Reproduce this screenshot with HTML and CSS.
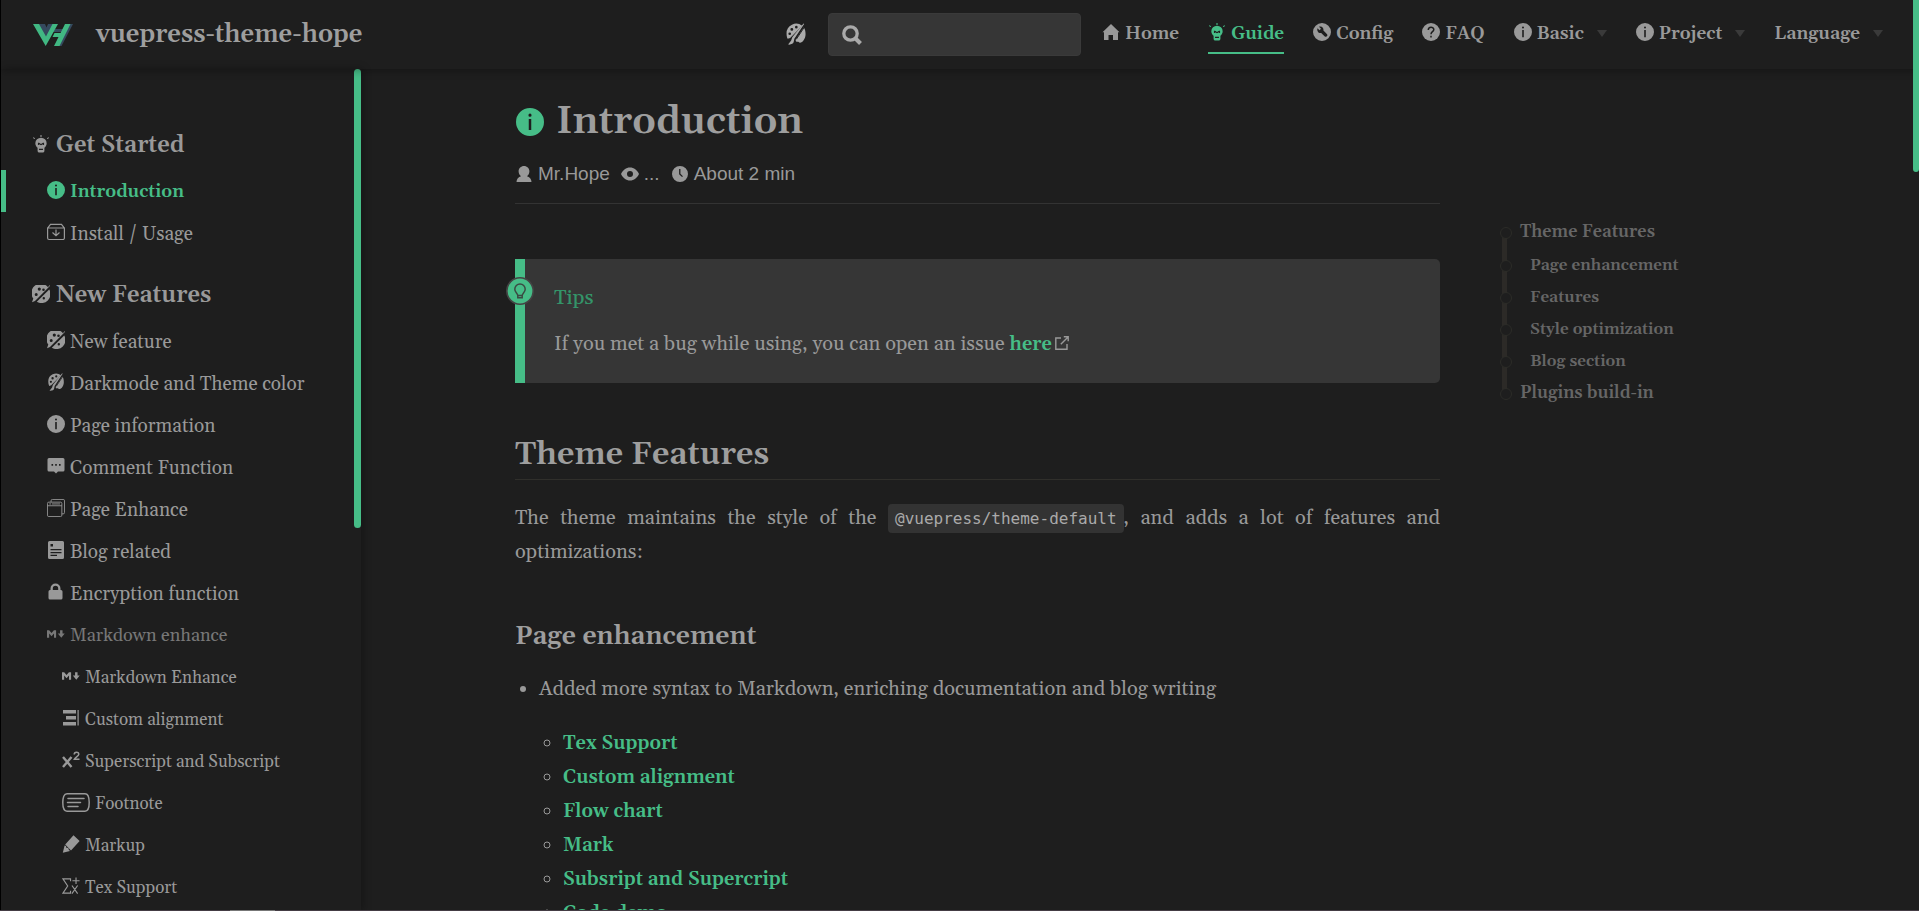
FILE: index.html
```html
<!DOCTYPE html>
<html lang="en">
<head>
<meta charset="utf-8">
<title>Introduction | vuepress-theme-hope</title>
<link rel="stylesheet" href="styles.css">
</head>
<body>
<svg class="sprite" aria-hidden="true">
  <symbol id="i-info" viewBox="0 0 18 18"><path fill-rule="evenodd" d="M9 0a9 9 0 1 0 0 18A9 9 0 0 0 9 0zM9 3.600a1 1 0 1 1 0 2 1 1 0 0 1 0-2zM8.200 7h1.600v7.200H8.200z"/></symbol>
  <symbol id="i-bulb" viewBox="0 0 18 20"><path fill-rule="evenodd" d="M9 3a6.300 6.300 0 0 0-6.300 6.300c0 2.300 1.200 3.800 2.500 5v3.200c0 1.200.8 2 2 2h3.600c1.200 0 2-.8 2-2v-3.200c1.300-1.200 2.500-2.700 2.500-5A6.300 6.300 0 0 0 9 3zM5.600 11.200V8.500h1.200L9 10l2.200-1.500h1.200v2.700h-1.100v-1L9 11.500l-2.300-1.300v1zM6.800 15.300h4.400v1.500H6.800z"/><path d="M8.400 0h1.200v2.200H8.400zM0 3.200l.6-.8 1.900 1.200-.6.8zM18 3.200l-.6-.8-1.900 1.200.6.8z"/></symbol>
  <symbol id="i-install" viewBox="0 0 18 18"><path fill="none" stroke="currentColor" stroke-width="1.200" d="M.6 5v10a1.500 1.500 0 0 0 1.500 1.500h13.800a1.500 1.500 0 0 0 1.500-1.500V5zM.8 4.800L3.500 1.400h11l2.700 3.400M9 6.500v6M5.500 9.500L9 12.700l3.500-3.200"/></symbol>
  <symbol id="i-discover" viewBox="0 0 18 18"><path fill-rule="evenodd" d="M17.600 0L16 2.300A9 9 0 0 0 1.300 13.500L0 17.200l3-1.200L17.900 1zM7.300 2.500a1.600 1.600 0 1 1 0 3.200 1.600 1.600 0 0 1 0-3.200zM4.200 8a1.500 1.500 0 1 1 0 3 1.500 1.500 0 0 1 0-3zM11.500 3.500a1.300 1.300 0 1 1 0 2.600 1.300 1.300 0 0 1 0-2.600z"/><path fill-rule="evenodd" d="M17.200 4.500L4.800 16.800A9 9 0 0 0 17.200 4.500zM11.800 12a1.200 1.200 0 1 1 0 2.400 1.200 1.200 0 0 1 0-2.400z"/></symbol>
  <symbol id="i-skin" viewBox="0 0 18 20"><path fill-rule="evenodd" d="M14.600 2.600A8.700 8.700 0 0 0 .4 9.500c0 1.900.3 3.400 1 4.900l2.300-.7zM5.200 4.500a1.300 1.300 0 1 1 0 2.600 1.300 1.300 0 0 1 0-2.600zM3.300 8.600a1.200 1.200 0 1 1 0 2.400 1.200 1.200 0 0 1 0-2.400zM9.300 2.600a1.200 1.200 0 1 1 0 2.400 1.200 1.200 0 0 1 0-2.400z"/><path d="M15.800.4L5.600 13l-1 3-2.800 3.600c2.500.3 4.800-.4 5.200-2.700l.5-2.500L16.400.8zM16 4L8.700 15.300c-.2 1.500.8 2.100 2 1.700 1-.3 1.200.9 2 .9 2.300 0 5-3.800 5-7.700 0-2.700-.5-4.800-1.700-6.200z"/><path fill="none" stroke="#1e1e1e" stroke-width=".8" d="M17 3.200L9.300 14.800"/></symbol>
  <symbol id="i-comment" viewBox="0 0 18 18"><path fill-rule="evenodd" d="M2 1h14a1.500 1.500 0 0 1 1.500 1.500V13a1.500 1.500 0 0 1-1.500 1.500h-5L9 16.500l-2-2H2A1.500 1.500 0 0 1 .5 13V2.500A1.500 1.500 0 0 1 2 1zM4.500 7v1.700h1.600V7zM8.200 7v1.700h1.600V7zM12 7v1.700h1.600V7z"/></symbol>
  <symbol id="i-pages" viewBox="0 0 20 20"><path fill="none" stroke="currentColor" stroke-width="1" d="M4.500 3.500V2A1.500 1.500 0 0 1 6 .5h12A1.500 1.500 0 0 1 19.500 2v13a1.500 1.500 0 0 1-1.500 1.500h-1.500M.5 5A1.500 1.500 0 0 1 2 3.500h13A1.500 1.500 0 0 1 16.500 5v13a1.500 1.500 0 0 1-1.500 1.500H2A1.500 1.500 0 0 1 .5 18zM.5 7.500h16M2.500 5.500h2M5.500 5.500h9"/></symbol>
  <symbol id="i-blog" viewBox="0 0 18 18"><path fill-rule="evenodd" d="M2.500 0h13A1.500 1.500 0 0 1 17 1.500v15a1.500 1.500 0 0 1-1.500 1.500h-13A1.500 1.500 0 0 1 1 16.500v-15A1.500 1.500 0 0 1 2.500 0zM3.500 3v2.500H6V3zM3.500 8v1.200h11V8zM3.500 11v1.200h11V11zM3.500 13.800V15H10v-1.200z"/></symbol>
  <symbol id="i-lock" viewBox="0 0 18 18"><path fill-rule="evenodd" d="M3.500 7V5.500a5 5 0 0 1 10 0V7h.5a1.500 1.500 0 0 1 1.500 1.500V15a1.500 1.500 0 0 1-1.500 1.500H3A1.500 1.500 0 0 1 1.500 15V8.500A1.500 1.500 0 0 1 3 7zM5.800 7h5.400V5.500a2.700 2.700 0 0 0-5.400 0z"/></symbol>
  <symbol id="i-md" viewBox="0 0 19 18"><path d="M0 13V5h2.300l2.500 3 2.500-3h2.300v8H7.400V8.400L4.800 11.300 2.300 8.400V13zM13.800 5h2.600v3.500h2.300L15.100 13l-3.700-4.500h2.400z"/></symbol>
  <symbol id="i-align" viewBox="0 0 18 18"><path d="M1 1h13v3.500H1zM4 7h10v3.500H4zM1 13h13v3.500H1zM15.500 1h1.200v15.500h-1.200z"/></symbol>
  <symbol id="i-sup" viewBox="0 0 18 18"><path fill="none" stroke="currentColor" stroke-width="2.400" d="M1 6l8.500 10M9.500 6L1 16"/><path fill="none" stroke="currentColor" stroke-width="1.500" d="M12.200 3.500c0-3 4.600-3 4.600-.3 0 1.900-3.500 3-4.500 5.100h5.200"/></symbol>
  <symbol id="i-note" viewBox="0 0 28 19"><path fill="none" stroke="currentColor" stroke-width="1.500" stroke-linecap="round" d="M5 .8h18c3 0 4.200 3.500 4.200 8.700s-1.200 8.700-4.200 8.700H5C2 18.200.8 14.700.8 9.500S2 .8 5 .8zM6 5.500h16M5.500 9.500h13M6 13.500h10"/></symbol>
  <symbol id="i-pen" viewBox="0 0 18 18"><path d="M11.500.3L17.600 6 9 15.500 3.200 9.600zM2.600 10.400L4 11l.3 1.800 1.900.3.600 1.600L8 16l-7.200 1.700z"/></symbol>
  <symbol id="i-tex" viewBox="0 0 19 18"><path fill="none" stroke="currentColor" stroke-width="1.200" d="M9 4V1.500H1L6 9l-5 7.500h8V14M10.500 8.500l6 8.500M16.500 8.500l-6 8.500M11 3.500h7.500M14.800 0v7"/></symbol>
  <symbol id="i-home" viewBox="0 0 18 18"><path d="M9 1L.5 9.200H2V17h4.500v-5h4.500v5H16V9.200h1.500z"/></symbol>
  <symbol id="i-tool" viewBox="0 0 18 18"><path fill-rule="evenodd" d="M9 0a9 9 0 1 0 0 18A9 9 0 0 0 9 0zM4.500 5.200l2 2 1.500-1.500-2-2c2.800-.8 5 1.200 4.400 3.800l3.700 3.700c1 1.500-.8 3.200-2.300 2.200L8.200 9.900C5.500 10.500 3.600 8 4.500 5.200z"/></symbol>
  <symbol id="i-help" viewBox="0 0 18 18"><path d="M9 0a9 9 0 1 0 0 18A9 9 0 0 0 9 0z"/><path fill="none" stroke="#1e1e1e" stroke-width="1.500" d="M6.300 7c0-3.800 5.500-3.500 5.500-.5 0 2.200-2.800 2.200-2.800 4.700M9 12.700v1.900"/></symbol>
  <symbol id="i-user" viewBox="0 0 16 16"><path d="M8 0C5 0 2.600 2.300 2.600 5.300c0 2.200 1 4 2.400 5C2.500 11 .5 13 .5 16h15c0-3-2-5-4.500-5.700 1.400-1 2.400-2.800 2.400-5C13.400 2.300 11 0 8 0z"/></symbol>
  <symbol id="i-eye" viewBox="0 0 18 16"><path fill-rule="evenodd" d="M9 1.500C5 1.500 2 4 0 8c2 4 5 6.500 9 6.500S16 12 18 8c-2-4-5-6.500-9-6.500zM9 5a3 3 0 1 1 0 6 3 3 0 0 1 0-6z"/></symbol>
  <symbol id="i-clock" viewBox="0 0 18 18"><path fill-rule="evenodd" d="M9 0a9 9 0 1 0 0 18A9 9 0 0 0 9 0zM8 3.500h1.500v5.200l2.800 2.800-1 1L8 9.300z"/></symbol>
  <symbol id="i-search" viewBox="0 0 20 20"><path fill="none" stroke="currentColor" stroke-width="4" d="M13 13L18.500 18.500"/><circle cx="8.500" cy="8.500" r="6.700" fill="none" stroke="currentColor" stroke-width="3.300"/></symbol>
  <symbol id="i-tip" viewBox="0 0 28 28"><circle cx="14" cy="14" r="13.200" fill="#46bd87" stroke="#444" stroke-width="1.600"/><path fill="none" stroke="#3b4a43" stroke-width="1.500" d="M11.800 18.500c0-2.400-3-3-3-6.300a5.200 5.200 0 0 1 10.400 0c0 3.300-3 3.900-3 6.300zM11.800 18.500v2.300h4.400v-2.300"/></symbol>
  <symbol id="i-out" viewBox="0 0 14 14"><path fill="none" stroke="currentColor" stroke-width="1.400" d="M6 2H.8v11.200H12V8M5.800 8.200L12.800 1.200M8.800.8h4.400v4.400"/></symbol>
</svg>

<header class="navbar">
  <a class="brand" href="#">
    <svg class="logo" viewBox="0 0 40 22" aria-hidden="true">
      <path fill="#35495e" d="M5 0h7l1.500 3.500L15 0h7l-8.500 15zM36 0h4L28.500 22H24zM20 8l2-3h9l-2 3z"/>
      <path fill="#41b883" d="M0 0h6l7 12.500L19.500 0H25L12.700 22zM32 0h5.500L26.500 22H21l4.500-9h-6l2-4h6z"/>
    </svg>
    <span class="site-name">vuepress-theme-hope</span>
  </a>
  <div class="tools">
    <button class="skin-button" type="button" aria-label="Theme color"><svg class="icon-skin"><use href="#i-skin"/></svg></button>
    <label class="search"><svg class="icon-search"><use href="#i-search"/></svg><input type="search" aria-label="Search"></label>
    <nav class="nav-links">
      <a href="#"><svg class="icon"><use href="#i-home"/></svg>Home</a>
      <a href="#" class="active"><svg class="icon"><use href="#i-bulb"/></svg>Guide</a>
      <a href="#"><svg class="icon"><use href="#i-tool"/></svg>Config</a>
      <a href="#"><svg class="icon"><use href="#i-help"/></svg>FAQ</a>
      <button type="button"><svg class="icon"><use href="#i-info"/></svg>Basic<span class="caret"></span></button>
      <button type="button"><svg class="icon"><use href="#i-info"/></svg>Project<span class="caret"></span></button>
      <button type="button">Language<span class="caret"></span></button>
    </nav>
  </div>
</header>

<div class="page">
  <aside class="sidebar">
    <section class="group">
      <h2><svg class="icon"><use href="#i-bulb"/></svg>Get Started</h2>
      <a href="#" class="active"><svg class="icon"><use href="#i-info"/></svg>Introduction</a>
      <a href="#"><svg class="icon"><use href="#i-install"/></svg>Install / Usage</a>
    </section>
    <section class="group">
      <h2><svg class="icon"><use href="#i-discover"/></svg>New Features</h2>
      <a href="#"><svg class="icon"><use href="#i-discover"/></svg>New feature</a>
      <a href="#"><svg class="icon"><use href="#i-skin"/></svg>Darkmode and Theme color</a>
      <a href="#"><svg class="icon"><use href="#i-info"/></svg>Page information</a>
      <a href="#"><svg class="icon"><use href="#i-comment"/></svg>Comment Function</a>
      <a href="#"><svg class="icon"><use href="#i-pages"/></svg>Page Enhance</a>
      <a href="#"><svg class="icon"><use href="#i-blog"/></svg>Blog related</a>
      <a href="#"><svg class="icon"><use href="#i-lock"/></svg>Encryption function</a>
      <h3><svg class="icon"><use href="#i-md"/></svg>Markdown enhance</h3>
      <div class="subgroup">
        <a href="#"><svg class="icon"><use href="#i-md"/></svg>Markdown Enhance</a>
        <a href="#"><svg class="icon"><use href="#i-align"/></svg>Custom alignment</a>
        <a href="#"><svg class="icon"><use href="#i-sup"/></svg>Superscript and Subscript</a>
        <a href="#"><svg class="icon wide"><use href="#i-note"/></svg>Footnote</a>
        <a href="#"><svg class="icon"><use href="#i-pen"/></svg>Markup</a>
        <a href="#"><svg class="icon"><use href="#i-tex"/></svg>Tex Support</a>
      </div>
    </section>
    <div class="side-thumb"></div>
  </aside>

  <main class="content">
    <article class="article">
      <h1><svg class="icon-title"><use href="#i-info"/></svg>Introduction</h1>
      <div class="meta">
        <span><svg class="icon-meta"><use href="#i-user"/></svg>Mr.Hope</span>
        <span><svg class="icon-meta"><use href="#i-eye"/></svg>...</span>
        <span><svg class="icon-meta"><use href="#i-clock"/></svg>About 2 min</span>
      </div>
      <hr>
      <div class="tip">
        <svg class="tip-badge"><use href="#i-tip"/></svg>
        <p class="tip-title">Tips</p>
        <p>If you met a bug while using, you can open an issue <a href="#">here</a><svg class="icon-out"><use href="#i-out"/></svg></p>
      </div>
      <h2>Theme Features</h2>
      <p class="intro">The theme maintains the style of the <code>@vuepress/theme-default</code>, and adds a lot of features and optimizations:</p>
      <h3>Page enhancement</h3>
      <ul class="list">
        <li>Added more syntax to Markdown, enriching documentation and blog writing
          <ul>
            <li><a href="#">Tex Support</a></li>
            <li><a href="#">Custom alignment</a></li>
            <li><a href="#">Flow chart</a></li>
            <li><a href="#">Mark</a></li>
            <li><a href="#">Subsript and Supercript</a></li>
            <li><a href="#">Code demo</a></li>
          </ul>
        </li>
      </ul>
    </article>
    <nav class="toc" aria-label="On this page">
      <a href="#">Theme Features</a>
      <a href="#" class="sub">Page enhancement</a>
      <a href="#" class="sub">Features</a>
      <a href="#" class="sub">Style optimization</a>
      <a href="#" class="sub">Blog section</a>
      <a href="#">Plugins build-in</a>
    </nav>
  </main>
</div>
<div class="page-thumb"></div>
<div class="status-edge"></div>
</body>
</html>
```
FILE: styles.css
```css
* { box-sizing: border-box; }
html, body { height: 100%; }
body {
  margin: 0;
  display: flex;
  flex-direction: column;
  overflow: hidden;
  border-left: 1px solid #000;
  background: #1e1e1e;
  color: #999;
  font: 20px/34px Gelasio, Georgia, "Liberation Serif", serif;
}
a { color: inherit; text-decoration: none; }
svg { fill: currentColor; flex: none; }
button { border: 0; padding: 0; background: none; color: inherit; font: inherit; }
.sprite { display: none; }
.icon { width: 18px; height: 18px; margin-bottom: 4px; }

.navbar {
  position: relative;
  z-index: 2;
  flex: none;
  height: 69px;
  padding: 0 36px 0 32px;
  display: flex;
  align-items: center;
  justify-content: space-between;
  box-shadow: 0 2px 8px rgba(0, 0, 0, .3);
}
.brand { display: flex; align-items: center; gap: 23px; }
.logo { width: 40px; height: 22px; }
.site-name { font-size: 25px; font-weight: 600; color: #9e9e9e; }
.tools { display: flex; align-items: center; }
.skin-button { display: flex; margin: 0 22px 2px 0; color: #aaa; }
.icon-skin { width: 20px; height: 22px; }
.search {
  width: 253px;
  height: 43px;
  margin-right: 21px;
  padding: 0 13px;
  display: flex;
  align-items: center;
  gap: 10px;
  border: 1px solid #3a3a3a;
  border-radius: 4px;
  background: #363636;
}
.icon-search { width: 20px; height: 20px; color: #aaa; }
.search input { flex: 1; min-width: 0; border: 0; outline: 0; background: none; color: inherit; font: inherit; }
.nav-links { display: flex; gap: 29px; font-size: 18px; font-weight: 600; }
.nav-links > * { display: flex; align-items: center; gap: 5px; height: 38px; border-bottom: 2px solid transparent; }
.nav-links .active { color: #46bd87; border-color: #46bd87; }
.caret { margin-left: 8px; border: 5px solid transparent; border-top: 7px solid #3a3a3a; border-bottom: 0; }

.page { flex: 1; min-height: 0; display: flex; }
.sidebar {
  position: relative;
  flex: none;
  width: 360px;
  padding-top: 35px;
  overflow: hidden;
  box-shadow: 2px 0 8px rgba(0, 0, 0, .3);
  line-height: 40px;
}
.side-thumb {
  position: absolute;
  top: 0;
  right: 0;
  width: 7px;
  height: 459px;
  border-radius: 4px;
  background: #46bd87;
}
.group { padding-top: 19px; }
.group h2, .group h3, .group a { display: flex; align-items: center; gap: 5px; margin: 0; height: 42px; padding-top: 2px; }
.group h2 { padding: 4px 0 0 31px; margin-bottom: 5px; gap: 6px; font-size: 23px; font-weight: 600; }
.group a, .group h3 { padding-left: 46px; font-size: 19px; font-weight: 400; }
.group h3 { color: #777; font-size: 18px; }
.group a.active { padding-left: 41px; border-left: 5px solid #46bd87; color: #46bd87; font-size: 18px; font-weight: 600; }
.group .subgroup a { padding-left: 61px; font-size: 17px; }
.icon.wide { width: 28px; height: 19px; }

.content { flex: 1; min-width: 0; display: flex; padding-left: 154px; }
.article { flex: 1; min-width: 0; color: #999; }
.article h1, .article h2, .article h3 { margin: 0; font-weight: 600; color: #9e9e9e; }
.article h1 { display: flex; align-items: center; gap: 11px; margin-top: 29px; font-size: 39px; line-height: 48px; }
.icon-title { width: 30px; height: 30px; padding: 0 1px; color: #46bd87; }
.meta { display: flex; gap: 11px; margin-top: 14px; font: 19px/28px "Liberation Sans", Arial, sans-serif; }
.meta span { display: flex; align-items: center; gap: 5px; }
.icon-meta { width: 18px; height: 16px; }
.article hr { margin: 15px 0 55px; border: 0; border-top: 1px solid #333; }
.tip {
  position: relative;
  padding: 22px 29px;
  border-left: 10px solid #46bd87;
  border-radius: 0 5px 5px 0;
  background: #363636;
}
.tip p { margin: 0; }
.tip .tip-title { margin-bottom: 12px; color: #349469; font-weight: 500; }
.tip-badge { position: absolute; left: -19px; top: 18px; width: 28px; height: 28px; }
.article a { color: #46bd87; font-size: 19px; font-weight: 600; }
.icon-out { width: 14px; height: 14px; margin-left: 3px; }
.article h2 { margin-top: 50px; padding-bottom: 2px; border-bottom: 1px solid #302f2b; font-size: 32px; line-height: 44px; }
.intro { margin: 21px 0 48px; text-align: justify; }
code { padding: 5px 7px; border-radius: 4px; background: #333; color: #aaa; font: 16px/20px "DejaVu Sans Mono", monospace; }
.article h3 { font-size: 26px; line-height: 40px; }
.list { margin: 15px 0 0; padding-left: 24px; }
.list ul { margin: 20px 0 0; padding-left: 24px; }

.toc { position: relative; flex: none; width: 479px; padding: 147px 0 0 80px; color: #666; }
.toc::before { content: ""; position: absolute; left: 62px; top: 164px; width: 5px; height: 158px; background: #2c2a27; }
.toc a { position: relative; display: block; font-size: 17px; line-height: 33px; font-weight: 600; }
.toc a.sub { padding-left: 10px; font-size: 16px; line-height: 32px; }
.toc a::before {
  content: "";
  position: absolute;
  left: -20px;
  top: 11px;
  width: 10px;
  height: 10px;
  border: 1px solid #2c2c28;
  border-radius: 50%;
  background: #1e1e1e;
}
.page-thumb { position: absolute; z-index: 3; top: 0; right: 0; width: 6px; height: 172px; border-radius: 0 0 4px 4px; background: #46bd87; }
.status-edge { position: absolute; z-index: 3; left: 0; right: 0; bottom: 0; height: 1px; background: linear-gradient(90deg, #443c44 230px, #777 230px, #777 275px, #443c44 275px); }
```
